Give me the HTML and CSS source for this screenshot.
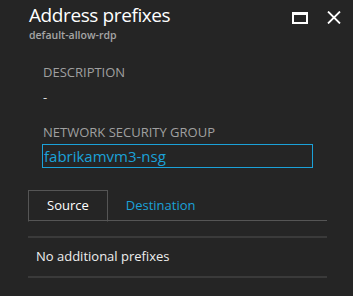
FILE: index.html
```html
<!DOCTYPE html>
<html>
<head>
<meta charset="utf-8">
<link rel="stylesheet" href="styles.css">
</head>
<body>
<div class="blade">
  <div class="header">
    <div class="titles">
      <div class="title">Address prefixes</div>
      <div class="subtitle">default-allow-rdp</div>
    </div>
    <div class="actions">
      <svg class="icon max" width="16" height="12" viewBox="0 0 16 12"><rect x="1" y="1.5" width="14" height="9.5" fill="none" stroke="#fff" stroke-width="2"/><rect x="0" y="0" width="16" height="3" fill="#fff"/></svg>
      <svg class="icon close" width="14" height="13" viewBox="0 0 14 13"><path d="M1 0.5 L13 12.5 M13 0.5 L1 12.5" stroke="#fff" stroke-width="1.8" fill="none"/></svg>
    </div>
  </div>
  <div class="content">
    <div class="field">
      <div class="label">DESCRIPTION</div>
      <div class="value">-</div>
    </div>
    <div class="field">
      <div class="label">NETWORK SECURITY GROUP</div>
      <div class="input">fabrikamvm3-nsg</div>
    </div>
  </div>
  <div class="tabs">
    <div class="tabbar">
      <div class="tab active">Source</div>
      <div class="tab">Destination</div>
    </div>
    <div class="row">No additional prefixes</div>
  </div>
</div>
</body>
</html>
```
FILE: styles.css
```css
html, body {
  margin: 0;
  padding: 0;
  background: #252525;
}
body {
  font-family: "Open Sans", "Noto Sans", sans-serif;
  color: #fff;
  width: 353px;
  height: 296px;
  overflow: hidden;
}
.header {
  display: flex;
  justify-content: space-between;
  align-items: flex-start;
  padding: 2px 12px 0 29px;
}
.title {
  font-size: 19px;
  letter-spacing: -0.4px;
  line-height: 26px;
  color: #fff;
}
.subtitle {
  font-size: 10.5px;
  font-weight: 600;
  color: #a6a6a6;
  line-height: 14px;
}
.actions {
  display: flex;
  align-items: center;
  gap: 19px;
  padding-top: 9px;
}
.icon { display: block; }
.content {
  padding: 22px 0 0 43px;
  display: flex;
  flex-direction: column;
  gap: 18px;
}
.label {
  font-size: 13px;
  color: #a0a0a0;
  line-height: 16px;
}
.value {
  font-size: 13px;
  color: #ddd;
  line-height: 18px;
  margin-top: 8px;
}
.input {
  margin-top: 4px;
  margin-left: -1px;
  width: 268px;
  height: 22px;
  border: 1px solid #1ba1d8;
  color: #1ba1d8;
  font-size: 15px;
  line-height: 22px;
  padding-left: 1px;
}
.tabs {
  margin: 22px 26px 0 28px;
}
.tabbar {
  display: flex;
  border-bottom: 1px solid #555;
  height: 30px;
}
.tab {
  font-size: 13px;
  line-height: 30px;
  color: #1ba1d8;
  padding: 0 18px;
}
.tab.active {
  color: #fff;
  border: 1px solid #555;
  border-bottom: 1px solid #252525;
  margin-bottom: -1px;
  height: 30px;
  line-height: 29px;
}
.row {
  margin-top: 15px;
  border-top: 2px solid #3a3a3a;
  border-bottom: 2px solid #3a3a3a;
  padding: 0 8px;
  height: 38px;
  line-height: 36px;
  font-size: 13px;
  color: #eee;
}
```
